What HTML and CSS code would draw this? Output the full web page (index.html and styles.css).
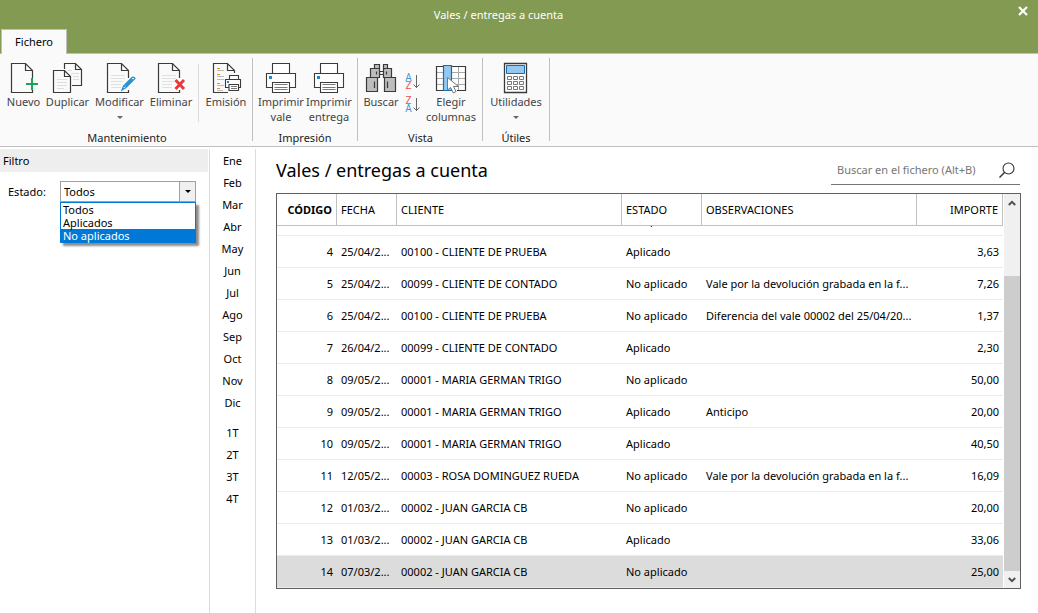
FILE: index.html
```html
<!DOCTYPE html>
<html lang="es">
<head>
<meta charset="utf-8">
<title>Vales / entregas a cuenta</title>
<link rel="stylesheet" href="styles.css">
</head>
<body>
<svg class="defs" aria-hidden="true">
  <symbol id="page" viewBox="0 0 32 32">
    <path d="M24.500 16V8.500L17.500 1.500H3.500V30.500H24.500V28M17.500 1.500V8.500H24.500" fill="none" stroke="#3a3a3a" stroke-width="1.200"/>
  </symbol>
  <symbol id="page-lines" viewBox="0 0 32 32">
    <path d="M7 13.500H21M7 16.500H21M7 19.500H19M7 22.500H17M7 25.500H17" stroke="#e0e0e0"/>
  </symbol>
  <symbol id="printer" viewBox="0 0 32 32">
    <g fill="#fff" stroke="#3a3a3a" stroke-width="1.100">
      <path d="M7.500 11.500V1.500H24.500V11.500"/>
      <path d="M7.500 25.500H1.500V11.500H30.500V25.500H24.500"/>
      <path d="M7.500 20.500H24.500V30.500H7.500Z"/>
    </g>
    <path d="M9.500 22.500H22.500M9.500 25.500H22.500M9.500 27.500H22.500" stroke="#777"/>
    <path d="M4 14h3v3H4z" fill="#1e88d2"/>
  </symbol>
</svg>

<header class="titlebar">
  <div class="caption">Vales / entregas a cuenta</div>
  <button class="close" aria-label="Cerrar"><svg width="10" height="10" viewBox="0 0 10 10"><path d="M1 1L9 9M9 1L1 9" stroke="#fff" stroke-width="2.200"/></svg></button>
  <div class="tabs"><button class="tab">Fichero</button></div>
</header>

<nav class="ribbon">
  <section class="group g-mant">
    <div class="tools">
      <button class="tool w43"><svg class="icon" viewBox="0 0 32 32"><use href="#page"/><path d="M24 16V28M18 22H30" stroke="#1aa658" stroke-width="2"/></svg><span>Nuevo</span></button>
      <button class="tool w45"><svg class="icon" viewBox="0 0 32 32"><path d="M12.500 7V1.500H23.500L29.500 7.500V23.500H20M23.500 1.500V7.500H29.500M1.500 8.500H12.500L18.500 14.500V30.500H1.500ZM12.500 8.500V14.500H18.500" fill="none" stroke="#3a3a3a" stroke-width="1.200"/><path d="M5 17.500H15M5 20.500H15M5 23.500H15M5 26.500H12M16 8.500H20M19 11.500H27M21 14.500H27M21 17.500H27" stroke="#ddd"/></svg><span>Duplicar</span></button>
      <button class="tool w59"><svg class="icon" viewBox="0 0 32 32"><use href="#page"/><use href="#page-lines"/><path d="M18 28L19.500 24L28 15.500Q30 14.500 31 16.500L22 25.500ZM19.500 24L22 25.500M21.500 24L28.500 17" fill="#fff" stroke="#1e88d2" stroke-width="1.200"/></svg><span>Modificar</span><i class="caret"></i></button>
      <button class="tool w44"><svg class="icon" viewBox="0 0 32 32"><use href="#page"/><use href="#page-lines"/><path d="M20.500 18L29 27M29 18L20.500 27" stroke="#e83a3a" stroke-width="3"/></svg><span>Eliminar</span></button>
      <hr class="divider">
      <button class="tool w44"><svg class="icon" viewBox="0 0 32 32"><path d="M24.500 11V8.500L17.500 1.500H3.500V30.500H18M17.500 1.500V8.500H24.500" fill="none" stroke="#3a3a3a" stroke-width="1.200"/><path d="M7 6.500H10M7 12.500H10M7 21.500H10M7 26.500H10" stroke="#e8930c"/><path d="M7 8.500H14M7 14.500H14M7 17.500H14M7 23.500H14M7 28.500H13" stroke="#bbb"/><g fill="#fff" stroke="#3a3a3a" stroke-width="1.100"><path d="M19.500 18V13.500H28.500V18M19.500 25.500H15.500V17.500H30.500V25.500H28.500M19 22.500H28.500V28.500H19Z"/></g><path d="M21 24.500H27M21 26.500H27" stroke="#777"/><path d="M17 19h2v2h-2z" fill="#1e88d2"/></svg><span>Emisión</span></button>
    </div>
    <h2>Mantenimiento</h2>
  </section>
  <section class="group">
    <div class="tools">
      <button class="tool w48"><svg class="icon" viewBox="0 0 32 32"><use href="#printer"/></svg><span>Imprimir<br>vale</span></button>
      <button class="tool w48"><svg class="icon" viewBox="0 0 32 32"><use href="#printer"/></svg><span>Imprimir<br>entrega</span></button>
    </div>
    <h2>Impresión</h2>
  </section>
  <section class="group g-vista">
    <div class="tools">
      <button class="tool w40"><svg class="icon" viewBox="0 0 32 32"><g fill="#bdbdbd" stroke="#3a3a3a" stroke-width="1.200"><path d="M14.500 9.500h4v3h-4z" fill="#fff"/><path d="M9.500 2.500h5v4h-5zM18.500 2.500h4v4h-4zM5.500 6.500h9v9h-9zM18.500 6.500h8v9h-8zM1.500 15.500h11v14h-11zM19.500 15.500h11v14h-11z"/><path d="M11.500 9.500V12.500M21.500 9.500V12.500M9.500 19.500V26M22.500 19.500V26"/></g></svg><span>Buscar</span></button>
      <div class="sorts">
        <button class="sort" aria-label="Orden ascendente"><span class="letters"><b class="a">A</b><b class="z">Z</b></span><svg width="7" height="16" viewBox="0 0 7 16"><path d="M3.500 1V14M.5 10.500L3.500 13.500L6.500 10.500" fill="none" stroke="#666"/></svg></button>
        <button class="sort" aria-label="Orden descendente"><span class="letters"><b class="z">Z</b><b class="a">A</b></span><svg width="7" height="16" viewBox="0 0 7 16"><path d="M3.500 1V14M.5 10.500L3.500 13.500L6.500 10.500" fill="none" stroke="#666"/></svg></button>
      </div>
      <button class="tool w58"><svg class="icon" viewBox="0 0 32 32"><path d="M1.500 4.500h29v24h-29z" fill="#fff"/><path d="M1.500 10.500h29M1.500 16.500h29M1.500 22.500h29M23.500 4.500v24" stroke="#aaa"/><path d="M22 28.500H30.500V4.500H1.500V28.500H17" fill="none" stroke="#3a3a3a" stroke-width="1.200"/><path d="M8.500 3.500h8v25h-8z" fill="#94c8ee" stroke="#1470b4" stroke-width="1.200"/><path d="M12.500 15.500V28L15.500 25.500L18.500 31L21 29.500L18.500 24.500H23.500Z" fill="#fff" stroke="#777"/></svg><span>Elegir<br>columnas</span></button>
    </div>
    <h2>Vista</h2>
  </section>
  <section class="group g-util">
    <div class="tools">
      <button class="tool w60"><svg class="icon" viewBox="0 0 32 32"><path d="M4.500 1.500h22v29h-22z" fill="#fff" stroke="#3a3a3a" stroke-width="1.300"/><path d="M6.500 3.500h18v8h-18z" fill="#94c8ee" stroke="#1470b4"/><path d="M7.500 14.500h4v3h-4zM13.500 14.500h4v3h-4zM19.500 14.500h4v3h-4zM7.500 19.500h4v3h-4zM13.500 19.500h4v3h-4zM19.500 19.500h4v3h-4zM7.500 24.500h4v3h-4zM13.500 24.500h4v3h-4zM19.500 24.500h4v3h-4z" fill="#fff" stroke="#777"/></svg><span>Utilidades</span><i class="caret"></i></button>
    </div>
    <h2>Útiles</h2>
  </section>
</nav>

<div class="workspace">
  <aside class="filter">
    <h2>Filtro</h2>
    <div class="field">
      <label for="estado">Estado:</label>
      <div class="combo">
        <select id="estado"><option>Todos</option><option>Aplicados</option><option>No aplicados</option></select>
        <span class="arrow"></span>
        <ul class="options" role="listbox" aria-label="Estado">
          <li role="option">Todos</li><li role="option">Aplicados</li><li role="option" class="active" aria-selected="true">No aplicados</li>
        </ul>
      </div>
    </div>
  </aside>

  <nav class="periods">
    <button>Ene</button><button>Feb</button><button>Mar</button><button>Abr</button><button>May</button><button>Jun</button><button>Jul</button><button>Ago</button><button>Sep</button><button>Oct</button><button>Nov</button><button>Dic</button>
    <div class="quarters"><button>1T</button><button>2T</button><button>3T</button><button>4T</button></div>
  </nav>

  <main class="content">
    <div class="head">
      <h1>Vales / entregas a cuenta</h1>
      <div class="search">
        <input type="text" aria-label="Buscar en el fichero" placeholder="Buscar en el fichero (Alt+B)">
        <svg width="18" height="18" viewBox="0 0 18 18"><circle cx="10.500" cy="7.500" r="5.500" fill="none" stroke="#333" stroke-width="1.100"/><path d="M6.500 11.500L1.500 16.500" stroke="#333" stroke-width="1.400"/></svg>
      </div>
    </div>
    <div class="grid">
      <div class="scroller" id="scroller">
        <table>
          <colgroup><col class="c-cod"><col class="c-fecha"><col><col class="c-estado"><col class="c-obs"><col class="c-imp"></colgroup>
          <thead><tr><th class="num sorted">CÓDIGO</th><th>FECHA</th><th>CLIENTE</th><th>ESTADO</th><th>OBSERVACIONES</th><th class="num">IMPORTE</th></tr></thead>
          <tbody>
            <tr><td></td><td></td><td></td><td>No aplicado</td><td></td><td></td></tr>
            <tr><td class="num">4</td><td>25/04/2...</td><td>00100 - CLIENTE DE PRUEBA</td><td>Aplicado</td><td></td><td class="num">3,63</td></tr>
            <tr><td class="num">5</td><td>25/04/2...</td><td>00099 - CLIENTE DE CONTADO</td><td>No aplicado</td><td>Vale por la devolución grabada en la f...</td><td class="num">7,26</td></tr>
            <tr><td class="num">6</td><td>25/04/2...</td><td>00100 - CLIENTE DE PRUEBA</td><td>No aplicado</td><td>Diferencia del vale 00002 del 25/04/20...</td><td class="num">1,37</td></tr>
            <tr><td class="num">7</td><td>26/04/2...</td><td>00099 - CLIENTE DE CONTADO</td><td>Aplicado</td><td></td><td class="num">2,30</td></tr>
            <tr><td class="num">8</td><td>09/05/2...</td><td>00001 - MARIA GERMAN TRIGO</td><td>No aplicado</td><td></td><td class="num">50,00</td></tr>
            <tr><td class="num">9</td><td>09/05/2...</td><td>00001 - MARIA GERMAN TRIGO</td><td>Aplicado</td><td>Anticipo</td><td class="num">20,00</td></tr>
            <tr><td class="num">10</td><td>09/05/2...</td><td>00001 - MARIA GERMAN TRIGO</td><td>Aplicado</td><td></td><td class="num">40,50</td></tr>
            <tr><td class="num">11</td><td>12/05/2...</td><td>00003 - ROSA DOMINGUEZ RUEDA</td><td>No aplicado</td><td>Vale por la devolución grabada en la f...</td><td class="num">16,09</td></tr>
            <tr><td class="num">12</td><td>01/03/2...</td><td>00002 - JUAN GARCIA CB</td><td>No aplicado</td><td></td><td class="num">20,00</td></tr>
            <tr><td class="num">13</td><td>01/03/2...</td><td>00002 - JUAN GARCIA CB</td><td>Aplicado</td><td></td><td class="num">33,06</td></tr>
            <tr class="current"><td class="num">14</td><td>07/03/2...</td><td>00002 - JUAN GARCIA CB</td><td>No aplicado</td><td></td><td class="num">25,00</td></tr>
          </tbody>
        </table>
      </div>
      <div class="scrollbar">
        <button aria-label="Subir"><svg width="8" height="6" viewBox="0 0 8 6"><path d="M.8 5L4 1.800L7.200 5" fill="none" stroke="#505050" stroke-width="2"/></svg></button>
        <div class="track"><div class="thumb"></div></div>
        <button aria-label="Bajar"><svg width="8" height="6" viewBox="0 0 8 6"><path d="M.8 1L4 4.200L7.200 1" fill="none" stroke="#505050" stroke-width="2"/></svg></button>
      </div>
    </div>
  </main>
</div>
<script src="app.js"></script>
</body>
</html>
```

FILE: styles.css
```css
* { box-sizing: border-box; }
body {
  margin: 0;
  height: 100vh;
  display: flex;
  flex-direction: column;
  background: #fff;
  color: #000;
  font: 11px/16px "Noto Sans", "Open Sans", sans-serif;
}
button { font: inherit; color: inherit; background: none; border: 0; padding: 0; margin: 0; }
h1, h2 { margin: 0; font-weight: 400; font-size: inherit; }
svg { display: block; flex: none; }
.defs { position: absolute; width: 0; height: 0; }

.titlebar {
  position: relative;
  display: flex;
  flex-direction: column;
  height: 54px;
  background: #839a52;
  border-bottom: 1px solid #c0c0c0;
}
.caption { padding-top: 7px; padding-right: 41px; text-align: center; color: #fff; }
.close { position: absolute; top: 6px; right: 10px; }
.tabs { display: flex; margin-top: auto; padding-left: 1px; margin-bottom: -1px; }
.tab { width: 66px; height: 25px; background: #fafafa; border: 1px solid #c0c0c0; border-bottom: 0; }

.ribbon {
  display: flex;
  height: 93px;
  padding: 4px 0 5px;
  background: #fafafa;
  border-bottom: 1px solid #c0c0c0;
}
.group { display: flex; flex-direction: column; padding: 4px 4px 0; border-right: 1px solid #c0c0c0; }
.g-mant { padding-left: 2px; }
.g-vista { padding: 4px 2px 0 3px; }
.g-util { padding: 4px 3px 0; }
.group h2 { margin-top: auto; margin-bottom: -5px; text-align: center; line-height: 16px; color: #222; }
.group.g-mant h2 { padding-left: 4px; }
.tools { display: flex; height: 64px; }
.tool { display: flex; flex-direction: column; align-items: center; justify-content: flex-start; color: #444; line-height: 15px; white-space: nowrap; }
.icon { width: 32px; height: 32px; }
.w40 { width: 40px; }
.w43 { width: 43px; }
.w44 { width: 44px; }
.w45 { width: 45px; }
.w48 { width: 48px; }
.w58 { width: 58px; }
.w59 { width: 59px; }
.w60 { width: 60px; }
.caret { margin-top: 7px; border: 3px solid transparent; border-top-color: #666; border-bottom: 0; }
.divider { width: 1px; height: 58px; margin: 2px 5px 0; border: 0; background: #dcdcdc; }
.sorts { display: flex; flex-direction: column; gap: 7px; padding: 12px 0 0 4px; width: 21px; }
.sort { display: flex; align-items: center; gap: 1px; height: 16px; }
.letters { display: flex; flex-direction: column; width: 7px; font: 10px/8px Roboto, sans-serif; text-align: center; }
.letters b { font-weight: 400; }
.a { color: #3a96d4; }
.z { color: #e85050; }

.workspace { flex: 1; display: flex; min-height: 0; padding-top: 2px; }
.filter { width: 210px; border-right: 1px solid #dcdcdc; }
.filter h2 { height: 23px; margin-right: 1px; padding: 4px 3px; background: #eee; }
.field { display: flex; align-items: center; padding: 9px 0 0 8px; }
.field label { width: 52px; }
.combo { position: relative; width: 136px; height: 21px; display: flex; border: 1px solid #a0a0a0; }
.combo select { appearance: none; flex: 1; border: 0; padding: 0 3px; background: #fff; font: inherit; color: inherit; }
.arrow { width: 16px; border-left: 1px solid #a0a0a0; background: #f0f0f0; display: flex; align-items: center; justify-content: center; }
.arrow::before { content: ""; border: 3px solid transparent; border-top-color: #000; border-bottom: 0; }
.options {
  position: absolute;
  top: 20px;
  left: -1px;
  right: -1px;
  margin: 0;
  padding: 0;
  list-style: none;
  background: #fff;
  border: 1px solid #0078d7;
  box-shadow: 3px 3px 2px rgba(0, 0, 0, .45);
}
.options li { padding: 0 2px; line-height: 13px; }
.options .active { background: #0078d7; color: #fff; }

.periods { width: 46px; padding: 1px 0 0; display: flex; flex-direction: column; border-right: 1px solid #dcdcdc; }
.periods button { height: 22px; }
.quarters { display: flex; flex-direction: column; padding-top: 8px; }

.content { flex: 1; min-width: 0; display: flex; flex-direction: column; padding: 0 17px 24px 20px; }
.head { display: flex; justify-content: space-between; height: 44px; }
.head h1 { font-size: 18px; line-height: 24px; padding-top: 9px; }
.search { display: flex; align-items: center; width: 189px; height: 29px; margin: 7px 1px 0 0; padding: 0 4px 0 6px; border-bottom: 1px solid #767676; }
.search input { flex: 1; min-width: 0; border: 0; padding: 0; font: inherit; background: none; outline: 0; }
.search input::placeholder { color: #767676; opacity: 1; }

.grid { flex: 1; min-height: 0; display: flex; gap: 1px; border: 1px solid #606060; }
.scroller { flex: 1; overflow: hidden; }
table { width: 100%; table-layout: fixed; border-collapse: separate; border-spacing: 0; }
.c-cod, .c-fecha { width: 60px; }
.c-estado { width: 80px; }
.c-obs { width: 215px; }
.c-imp { width: 86px; }
th, td { height: 32px; padding: 0 4px; text-align: left; white-space: nowrap; overflow: hidden; font-weight: 400; }
th { position: sticky; top: 0; background: #fff; border-right: 1px solid #c0c0c0; border-bottom: 1px solid #c0c0c0; }
td { border-bottom: 1px solid #ececec; }
.num { text-align: right; }
th.sorted { font-weight: 700; }
.current td { background: #dcdcdc; }
.scrollbar { width: 16px; display: flex; flex-direction: column; background: #f0f0f0; }
.scrollbar button { height: 17px; display: flex; align-items: center; justify-content: center; }
.track { flex: 1; display: flex; flex-direction: column; justify-content: flex-end; }
.thumb { height: 82%; background: #cdcdcd; }
```

FILE: app.js
```js
const scroller = document.getElementById("scroller");
scroller.scrollTop = scroller.scrollHeight;
```
